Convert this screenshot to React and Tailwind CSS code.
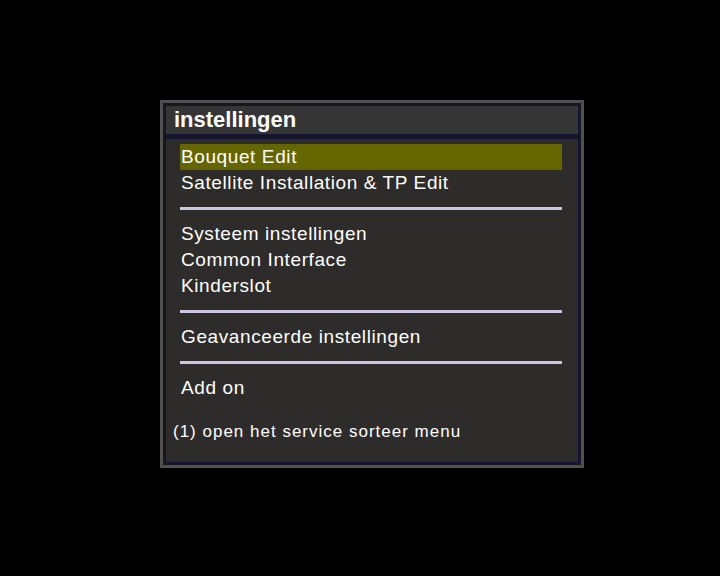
import React from "react";

const groups = [
  ["Bouquet Edit", "Satellite Installation & TP Edit"],
  ["Systeem instellingen", "Common Interface", "Kinderslot"],
  ["Geavanceerde instellingen"],
  ["Add on"],
];

function Separator() {
  return <div className="h-[3px] bg-[#c8c8e0] my-[11px] mr-[16px]" />;
}

export default function App() {
  return (
    <div
      className="w-[720px] h-[576px] bg-black pt-[100px] pl-[160px]"
      style={{ fontFamily: '"Liberation Sans", Arial, sans-serif' }}
    >
      <div className="w-[424px] h-[368px] bg-[#505050] p-[3px]">
        <div className="h-full bg-[#18181c] p-[2px] flex flex-col gap-[3px]">
          <div className="h-[30px] bg-[#353535] border border-[#14143a] flex items-center pl-[8px]">
            <span className="text-white font-bold text-[22px] leading-none">instellingen</span>
          </div>
          <div className="flex-1 bg-[#2e2b2b] border border-[#14143a] pl-[14px] pt-[5px] flex flex-col">
            {groups.map((g, gi) => (
              <div key={gi}>
                {gi > 0 && <Separator />}
                {g.map((item, i) => (
                  <div
                    key={item}
                    className={`h-[26px] flex items-center pl-[1px] mr-[16px] text-white text-[19px] tracking-[0.6px] ${
                      gi === 0 && i === 0 ? "bg-[#666600]" : ""
                    }`}
                  >
                    {item}
                  </div>
                ))}
              </div>
            ))}
            <div className="mt-[18px] -ml-[7px] text-white text-[17px] tracking-[1px]">
              (1) open het service sorteer menu
            </div>
          </div>
        </div>
      </div>
    </div>
  );
}
